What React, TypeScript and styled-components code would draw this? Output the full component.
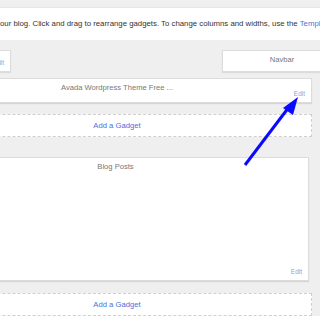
import React from 'react'
import styled, { createGlobalStyle } from 'styled-components'

const GlobalStyle = createGlobalStyle`
  html, body {
    margin: 0;
    padding: 0;
    background: #efefef;
    overflow: hidden;
  }
  body {
    font-family: "Liberation Sans", Arial, sans-serif;
  }
`

type GadgetProps = {
  title: string
  height: number
  trim?: number
}

const Gadget = ({ title, height, trim = 0 }: GadgetProps) => (
  <Box $height={height} $trim={trim}>
    <Title>{title}</Title>
    <EditLink>Edit</EditLink>
  </Box>
)

const App = () => {
  return (
    <>
      <GlobalStyle />
      <Screen>
        <TopBar>
          <Info>
            our blog. Click and drag to rearrange gadgets. To change columns and widths, use the{' '}
            <Link>Template Designer</Link>
          </Info>
        </TopBar>
        <Canvas>
          <HeaderRow>
            <SmallBox>
              <EditLink>Edit</EditLink>
            </SmallBox>
            <NavbarBox>Navbar</NavbarBox>
          </HeaderRow>
          <Column>
            <Gadget title="Avada Wordpress Theme Free ..." height={25} />
            <AddGadget $mt={11}>Add a Gadget</AddGadget>
            <Spacer $h={20} />
            <Gadget title="Blog Posts" height={124} trim={3} />
            <AddGadget $mt={12}>Add a Gadget</AddGadget>
          </Column>
        </Canvas>
        <Arrow width="320" height="316" viewBox="0 0 320 316">
          <line x1="245" y1="165" x2="289" y2="107" stroke="#0a0aff" strokeWidth="3" />
          <polygon points="298,97 283,108 293,115" fill="#0a0aff" />
        </Arrow>
      </Screen>
    </>
  )
}

export default App

const Screen = styled.div`
  position: relative;
  width: 320px;
  height: 316px;
  overflow: hidden;
  background: #efefef;
`

const TopBar = styled.div`
  background: #fff;
  height: 32px;
  margin-top: 7px;
  border-top: 1px solid #e6e6e6;
  display: flex;
  align-items: center;
`

const Info = styled.div`
  font-size: 7.8px;
  color: #333;
  white-space: nowrap;
  padding-bottom: 2px;
`

const Link = styled.span`
  color: #4a73d9;
`

const Canvas = styled.div`
  margin-left: -78px;
  width: 420px;
  padding-top: 10px;
`

const HeaderRow = styled.div`
  display: flex;
  justify-content: space-between;
  height: 22px;
  margin-bottom: 6px;
`

const SmallBox = styled.div`
  position: relative;
  width: 89px;
  background: #fff;
  border: 1px solid #dcdcdc;
  box-shadow: 0 1px 1px rgba(0, 0, 0, 0.08);
  box-sizing: border-box;
`

const NavbarBox = styled.div`
  width: 120px;
  background: #fff;
  border: 1px solid #dcdcdc;
  box-shadow: 0 1px 1px rgba(0, 0, 0, 0.08);
  box-sizing: border-box;
  display: flex;
  justify-content: center;
  padding-top: 4px;
  font-size: 7.6px;
  color: #777;
`

const Column = styled.div`
  width: 390px;
  display: flex;
  flex-direction: column;
`

const Box = styled.div<{ $height: number; $trim: number }>`
  position: relative;
  height: ${props => props.$height}px;
  margin-right: ${props => props.$trim}px;
  background: #fff;
  border: 1px solid #dcdcdc;
  box-shadow: 0 1px 1px rgba(0, 0, 0, 0.1);
  box-sizing: border-box;
  display: flex;
  justify-content: center;
`

const Title = styled.div`
  font-size: 7.6px;
  color: #777;
  padding-top: 4px;
`

const EditLink = styled.span`
  position: absolute;
  right: 6px;
  bottom: 5px;
  font-size: 6.5px;
  color: #8ea4d6;
`

const AddGadget = styled.div<{ $mt: number }>`
  margin-top: ${props => props.$mt}px;
  height: 23px;
  border: 1px dashed #cfcfcf;
  background: #fff;
  box-sizing: border-box;
  display: flex;
  align-items: center;
  justify-content: center;
  font-size: 7.7px;
  color: #4a6fdc;
`

const Spacer = styled.div<{ $h: number }>`
  height: ${props => props.$h}px;
`

const Arrow = styled.svg`
  position: absolute;
  left: 0;
  top: 0;
  pointer-events: none;
`
